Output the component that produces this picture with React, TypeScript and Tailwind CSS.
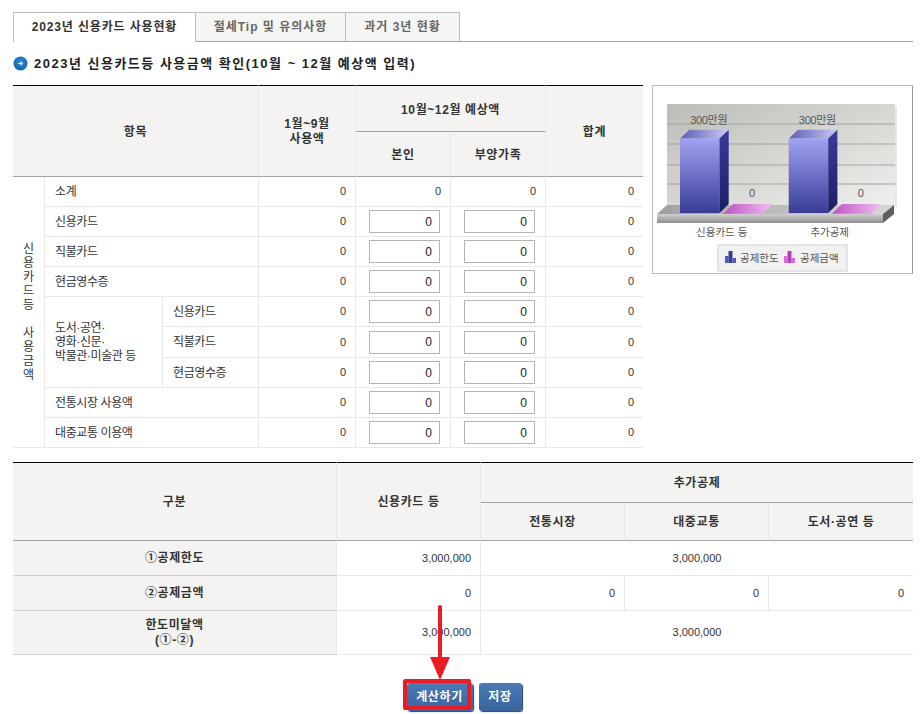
import React from "react";

const th = "bg-[#f4f3f1] font-bold text-center align-middle text-[#333] tracking-[0.6px] pt-[2px] border-r border-r-[#e9e8e6]";
const tdNum = "text-right align-middle pr-[9px] text-[11px] text-[#333] border-r border-b border-[#e8e8e8]";
const tdLabel = "text-left align-middle pl-[10px] tracking-[-0.4px] text-[#333] border-r border-b border-[#e8e8e8]";

function Num({ v = "0", className = "" }: { v?: string; className?: string }) {
  return <td className={`${tdNum} ${className}`}>{v}</td>;
}

function InputCell({ className = "" }: { className?: string }) {
  return (
    <td className={`text-right align-middle pr-[10px] border-r border-b border-[#e8e8e8] ${className}`}>
      <input
        readOnly
        value="0"
        className="w-[71px] h-[23px] border border-[#b4b4b4] bg-white text-right pr-[7px] text-[12px] text-[#222] outline-none inline-block align-middle"
      />
    </td>
  );
}

function Rest() {
  return (
    <>
      <Num />
      <InputCell />
      <InputCell />
      <Num className="border-r-0" />
    </>
  );
}

function UsageTable() {
  const vertical = ["신", "용", "카", "드", "등", "\u00a0", "사", "용", "금", "액"];
  return (
    <table className="table-fixed border-separate border-spacing-0 w-[630px] text-[12px]">
      <colgroup>
        <col className="w-[32px]" />
        <col className="w-[118px]" />
        <col className="w-[96px]" />
        <col className="w-[97px]" />
        <col className="w-[95px]" />
        <col className="w-[95px]" />
        <col className="w-[97px]" />
      </colgroup>
      <thead>
        <tr className="h-[47px]">
          <th colSpan={3} rowSpan={2} className={`${th} border-t border-t-black border-b border-b-[#a3a3a3]`}>항목</th>
          <th rowSpan={2} className={`${th} border-t border-t-black border-b border-b-[#a3a3a3] leading-[15px]`}>1월~9월<br />사용액</th>
          <th colSpan={2} className={`${th} border-t border-t-black border-b border-b-[#a3a3a3]`}>10월~12월 예상액</th>
          <th rowSpan={2} className={`${th} border-r-0 border-t border-t-black border-b border-b-[#a3a3a3]`}>합계</th>
        </tr>
        <tr className="h-[45px]">
          <th className={`${th} border-b border-b-[#a3a3a3]`}>본인</th>
          <th className={`${th} border-b border-b-[#a3a3a3]`}>부양가족</th>
        </tr>
      </thead>
      <tbody>
        <tr className="h-[30px]">
          <td rowSpan={9} className="text-center align-middle leading-[14px] text-[12px] text-[#333] border-r border-b border-[#e8e8e8]">
            {vertical.map((c, i) => (
              <div key={i}>{c}</div>
            ))}
          </td>
          <td colSpan={2} className={tdLabel}>소계</td>
          <Num />
          <Num />
          <Num />
          <Num className="border-r-0" />
        </tr>
        <tr className="h-[30px]"><td colSpan={2} className={tdLabel}>신용카드</td><Rest /></tr>
        <tr className="h-[30px]"><td colSpan={2} className={tdLabel}>직불카드</td><Rest /></tr>
        <tr className="h-[30px]"><td colSpan={2} className={tdLabel}>현금영수증</td><Rest /></tr>
        <tr className="h-[30px]">
          <td rowSpan={3} className={`${tdLabel} leading-[14px]`}>
            도서·공연·<br />영화·신문·<br />박물관·미술관 등
          </td>
          <td className={tdLabel}>신용카드</td>
          <Rest />
        </tr>
        <tr className="h-[31px]"><td className={tdLabel}>직불카드</td><Rest /></tr>
        <tr className="h-[30px]"><td className={tdLabel}>현금영수증</td><Rest /></tr>
        <tr className="h-[30px]"><td colSpan={2} className={tdLabel}>전통시장 사용액</td><Rest /></tr>
        <tr className="h-[30px]"><td colSpan={2} className={tdLabel}>대중교통 이용액</td><Rest /></tr>
      </tbody>
    </table>
  );
}

function LegendIcon({ x, c1, c2 }: { x: number; c1: string; c2: string }) {
  return (
    <g>
      <rect x={x} y={171} width={3.5} height={7} fill={c1} />
      <rect x={x + 3.5} y={166} width={4} height={12} fill={c2} />
      <rect x={x + 7.5} y={173} width={3.5} height={5} fill={c1} />
    </g>
  );
}

function Bar({ dx }: { dx: number }) {
  return (
    <g transform={`translate(${dx} 0)`}>
      <polygon points="28,53.5 37.3,44.7 76.7,44.7 67.5,53.5" fill="url(#barTop)" />
      <rect x={28} y={53.5} width={39.5} height={74.5} fill="url(#barFront)" />
      <polygon points="67.5,53.5 76.7,44.7 76.7,119 67.5,128" fill="url(#barSide)" />
      <polygon points="71.3,128.7 81.3,119 120.7,119 110.7,128.7" fill="url(#pinkTop)" />
      <text x={56.7} y={39} textAnchor="middle" fontSize={11} letterSpacing={-0.3} fill="#555">300만원</text>
      <text x={100} y={112} textAnchor="middle" fontSize={11} fill="#555">0</text>
    </g>
  );
}

function Chart() {
  return (
    <div className="w-[261px] h-[189px] border border-[#bcbcbc] border-r-[#999] bg-white shrink-0">
      <svg width={259} height={187} viewBox="1 1 259 187" className="block">
        <defs>
          <linearGradient id="wall" x1="0" y1="0" x2="1" y2="1">
            <stop offset="0" stopColor="#bcbcb8" />
            <stop offset="1" stopColor="#efefed" />
          </linearGradient>
          <linearGradient id="barFront" x1="0" y1="0" x2="0" y2="1">
            <stop offset="0" stopColor="#a0a2f2" />
            <stop offset="1" stopColor="#383c96" />
          </linearGradient>
          <linearGradient id="barTop" x1="0" y1="0" x2="1" y2="0">
            <stop offset="0" stopColor="#5b5eb8" />
            <stop offset="1" stopColor="#c8c9f2" />
          </linearGradient>
          <linearGradient id="barSide" x1="0" y1="0" x2="0" y2="1">
            <stop offset="0" stopColor="#383c9c" />
            <stop offset="1" stopColor="#1c1e62" />
          </linearGradient>
          <linearGradient id="pinkTop" x1="0" y1="0" x2="1" y2="0">
            <stop offset="0" stopColor="#c050c4" />
            <stop offset="1" stopColor="#f0c0f0" />
          </linearGradient>
          <linearGradient id="floorFront" x1="0" y1="0" x2="0" y2="1">
            <stop offset="0" stopColor="#d0d0d0" />
            <stop offset="1" stopColor="#8e8e8e" />
          </linearGradient>
          <linearGradient id="floorTop" x1="0" y1="0" x2="1" y2="0">
            <stop offset="0" stopColor="#a0a0a0" />
            <stop offset="1" stopColor="#d8d8d8" />
          </linearGradient>
        </defs>
        <rect x={17} y={21} width={228} height={101} fill="#dcdcdc" opacity={0.7} />
        <rect x={15} y={19} width={228} height={101} fill="url(#wall)" />
        {[39, 59, 80, 99].map((y) => (
          <line key={y} x1={15} x2={243} y1={y} y2={y} stroke="#a3a3a0" strokeWidth={1} />
        ))}
        <polygon points="15,120 242,120 231,129 5,129" fill="url(#floorTop)" />
        <rect x={5} y={129} width={226} height={9} fill="url(#floorFront)" />
        <polygon points="231,129 242,120 242,129 231,138" fill="#5f5f5f" />
        <Bar dx={0} />
        <Bar dx={108.7} />
        <text x={69.7} y={151} textAnchor="middle" fontSize={10.5} fill="#555">신용카드 등</text>
        <text x={177.7} y={151} textAnchor="middle" fontSize={10.5} fill="#555">추가공제</text>
        <rect x={66} y={160} width={129} height={26} fill="#f1f1f1" stroke="#e4e4e4" strokeWidth={2} />
        <LegendIcon x={73} c1="#5457c4" c2="#383c9c" />
        <text x={88} y={177} fontSize={10.5} fill="#555">공제한도</text>
        <LegendIcon x={132} c1="#d070d4" c2="#b040b8" />
        <text x={148} y={177} fontSize={10.5} fill="#555">공제금액</text>
      </svg>
    </div>
  );
}

const sth = "bg-[#f4f3f1] font-bold text-center align-middle text-[#333] tracking-[0.6px] border-r border-r-[#e9e8e6]";
const rowHead = "bg-[#f4f3f1] font-bold text-center align-middle text-[#333] tracking-[0.6px] border-r border-r-[#e9e8e6] border-b border-b-[#cfcfcf] leading-[15px]";
const cell = "text-[11px] text-[#333] align-middle border-r border-b border-[#e8e8e8]";

function LimitTable() {
  return (
    <table className="table-fixed border-separate border-spacing-0 w-[900px] text-[12px]">
      <colgroup>
        <col className="w-[324px]" />
        <col className="w-[144px]" />
        <col className="w-[144px]" />
        <col className="w-[144px]" />
        <col className="w-[144px]" />
      </colgroup>
      <thead>
        <tr className="h-[41px]">
          <th rowSpan={2} className={`${sth} border-t border-t-black border-b border-b-[#a3a3a3]`}>구분</th>
          <th rowSpan={2} className={`${sth} border-t border-t-black border-b border-b-[#a3a3a3]`}>신용카드 등</th>
          <th colSpan={3} className={`${sth} border-r-0 border-t border-t-black border-b border-b-[#a3a3a3] pt-px`}>추가공제</th>
        </tr>
        <tr className="h-[38px]">
          <th className={`${sth} border-b border-b-[#a3a3a3]`}>전통시장</th>
          <th className={`${sth} border-b border-b-[#a3a3a3]`}>대중교통</th>
          <th className={`${sth} border-r-0 border-b border-b-[#a3a3a3]`}>도서·공연 등</th>
        </tr>
      </thead>
      <tbody>
        <tr className="h-[35px]">
          <td className={rowHead}>①공제한도</td>
          <td className={`${cell} text-right pr-[9px]`}>3,000,000</td>
          <td colSpan={3} className={`${cell} text-center border-r-0`}>3,000,000</td>
        </tr>
        <tr className="h-[35px]">
          <td className={rowHead}>②공제금액</td>
          <td className={`${cell} text-right pr-[9px]`}>0</td>
          <td className={`${cell} text-right pr-[9px]`}>0</td>
          <td className={`${cell} text-right pr-[9px]`}>0</td>
          <td className={`${cell} text-right pr-[9px] border-r-0`}>0</td>
        </tr>
        <tr className="h-[44px]">
          <td className={rowHead}>한도미달액<br />(①-②)</td>
          <td className={`${cell} text-right pr-[9px]`}>3,000,000</td>
          <td colSpan={3} className={`${cell} text-center border-r-0`}>3,000,000</td>
        </tr>
      </tbody>
    </table>
  );
}

const btn = "h-[28px] rounded-[3px] bg-gradient-to-b from-[#4a7ab4] to-[#3a659f] text-white font-bold text-[12px] tracking-[0.6px] shadow-[1px_1px_1px_#1f3f6f]";

export default function App() {
  return (
    <div className="w-[922px] h-[714px] overflow-hidden bg-white pt-[12px] pl-[13px] text-[12px] [font-family:'Liberation_Sans','Noto_Sans_CJK_KR',sans-serif]">
      <div className="flex w-[900px] h-[30px] border-b border-[#a3a3a3]">
        <div className="w-[183px] h-[30px] border border-b-0 border-[#bcbcbc] bg-white text-center font-bold text-[#333] leading-[28px] tracking-[0.85px] text-[12px]">2023년 신용카드 사용현황</div>
        <div className="w-[150px] h-[29px] border-t border-r border-[#bcbcbc] bg-[#f5f5f3] text-center font-bold text-[#666] leading-[28px] tracking-[1px] text-[12px]">절세Tip 및 유의사항</div>
        <div className="w-[114px] h-[29px] border-t border-r border-[#bcbcbc] bg-[#f5f5f3] text-center font-bold text-[#666] leading-[28px] tracking-[1px] text-[12px]">과거 3년 현황</div>
      </div>

      <div className="flex items-center h-[43px] gap-[6px]">
        <svg width={15} height={15} viewBox="0 0 15 15" className="shrink-0">
          <defs>
            <radialGradient id="ic" cx="0.5" cy="0.4" r="0.7">
              <stop offset="0" stopColor="#2f8fe0" />
              <stop offset="1" stopColor="#125a9c" />
            </radialGradient>
          </defs>
          <circle cx={7.5} cy={7.5} r={7} fill="url(#ic)" />
          <path d="M5 7.5h4.5M7.5 5.8l1.9 1.7-1.9 1.7" stroke="#e8f4ff" strokeWidth={1.1} fill="none" />
        </svg>
        <h2 className="font-bold text-[13px] text-[#222] tracking-[1.5px]">2023년 신용카드등 사용금액 확인(10월 ~ 12월 예상액 입력)</h2>
      </div>

      <div className="flex items-start gap-[9px]">
        <UsageTable />
        <Chart />
      </div>

      <div className="mt-[14px]">
        <LimitTable />
      </div>

      <div className="relative flex justify-center gap-[6px] mt-[28px] ml-[1px] w-[900px]">
        <button className={`${btn} w-[66px] relative`}>
          <span className="absolute left-[-4px] top-[-4px] w-[68px] h-[31px] border-[4px] border-[#ed1c24] rounded-[2px]" />
          계산하기
        </button>
        <button className={`${btn} w-[43px]`}>저장</button>
        <svg width={24} height={76} viewBox="0 0 24 76" className="absolute left-[414px] top-[-78px] pointer-events-none">
          <line x1={12} y1={2} x2={12} y2={55} stroke="#ed1c24" strokeWidth={4} strokeLinecap="round" />
          <polygon points="2,52 22,52 12,75" fill="#ed1c24" />
        </svg>
      </div>
    </div>
  );
}
